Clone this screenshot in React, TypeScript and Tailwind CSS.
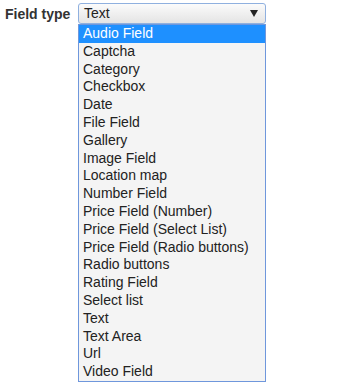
const options = [
  'Audio Field',
  'Captcha',
  'Category',
  'Checkbox',
  'Date',
  'File Field',
  'Gallery',
  'Image Field',
  'Location map',
  'Number Field',
  'Price Field (Number)',
  'Price Field (Select List)',
  'Price Field (Radio buttons)',
  'Radio buttons',
  'Rating Field',
  'Select list',
  'Text',
  'Text Area',
  'Url',
  'Video Field',
];

export default function App() {
  return (
    <div className="w-[352px] h-[391px] bg-white font-['Liberation_Sans',Arial,sans-serif] text-[#333]">
      <div className="flex items-start pt-[3px] pl-[5px]">
        <label className="w-[73px] pt-[3px] text-[14px] font-bold leading-[16px]">
          Field type
        </label>
        <div className="flex flex-col w-[188px]">
          <div className="flex items-center justify-between h-[21px] pl-[5px] pr-[7px] rounded-[3px] border border-[#8fb0df] bg-gradient-to-b from-[#fbfbfb] to-[#e4e4e4] text-[14px] text-[#222]">
            <span>Text</span>
            <svg width="8" height="7" viewBox="0 0 8 7">
              <path d="M0 0H8L4 7Z" fill="#222" />
            </svg>
          </div>
          <ul className="border border-[#6f97dc] bg-[#f4f4f4] text-[14px] text-[#222]">
            {options.map((opt, i) => (
              <li
                key={opt}
                className={
                  i === 0
                    ? 'h-[17.8px] leading-[17.8px] pl-[4px] bg-[#1e90ff] text-white'
                    : 'h-[17.8px] leading-[17.8px] pl-[4px]'
                }
              >
                {opt}
              </li>
            ))}
          </ul>
        </div>
      </div>
    </div>
  );
}
